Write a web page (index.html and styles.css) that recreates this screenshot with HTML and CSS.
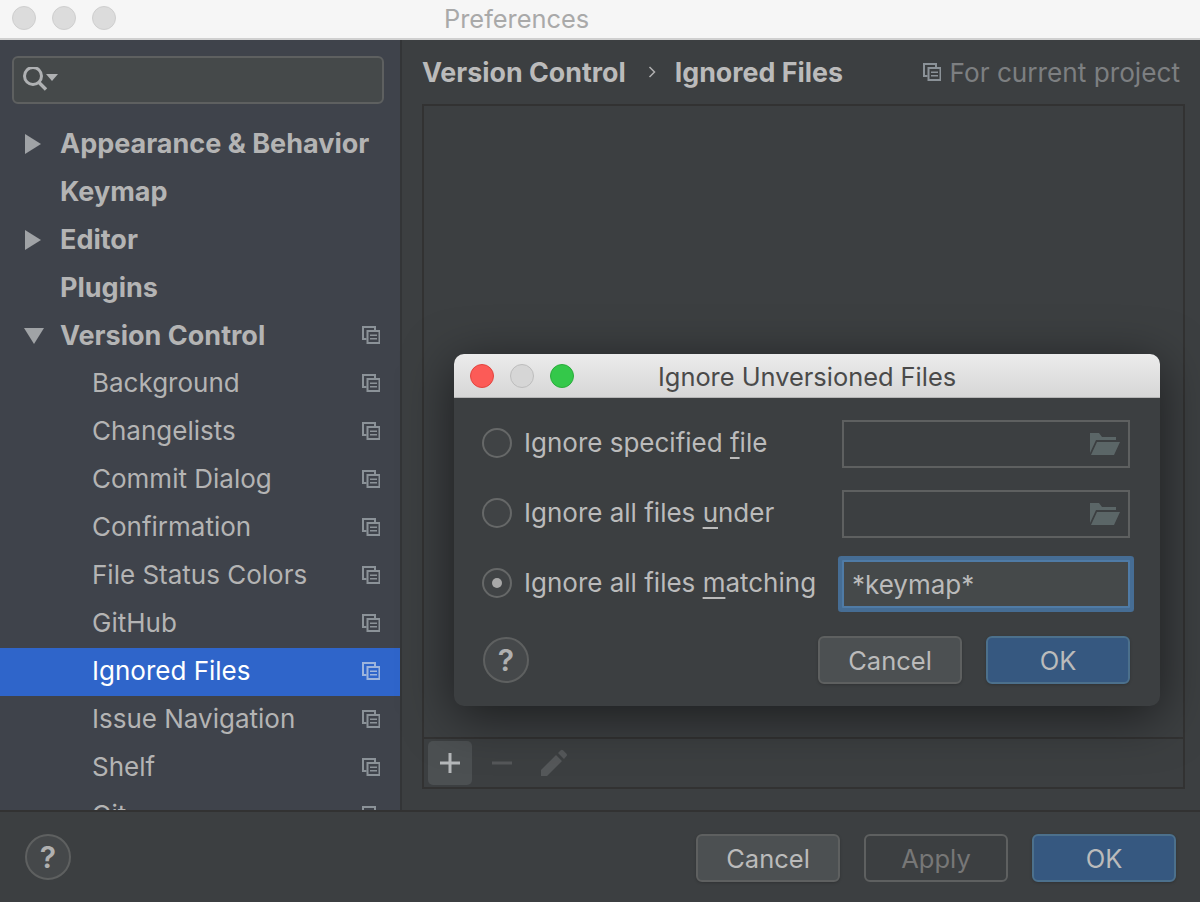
FILE: index.html
```html
<!DOCTYPE html>
<html lang="en">
<head>
    <meta charset="UTF-8">
    <meta name="viewport" content="width=device-width, initial-scale=1.0">
    <title>Preferences</title>
    <link rel="stylesheet" href="styles.css">
</head>
<body>
    <svg class="defs" width="0" height="0">
        <symbol id="project" viewBox="0 0 18 18">
            <path d="M4.500 13H1V1h12v3.500" fill="none" stroke="currentColor" stroke-width="2"/>
            <rect x="5.500" y="5" width="12" height="12" fill="none" stroke="currentColor" stroke-width="2"/>
            <path d="M8 8.500h7v1.600H8zM8 12h7v1.600H8z" fill="currentColor"/>
        </symbol>
        <symbol id="folder" viewBox="0 0 30 22">
            <path d="M0 22V0h9l3 4h14v3H6L0 20z M7 9h23l-6 13H1z" fill="currentColor"/>
        </symbol>
    </svg>

    <div class="window">
        <div class="title-bar">
            <span class="light"></span>
            <span class="light"></span>
            <span class="light"></span>
            <span class="window-title">Preferences</span>
        </div>

        <div class="main">
            <div class="sidebar">
                <div class="search">
                    <svg class="search-icon" width="36" height="26" viewBox="0 0 36 26">
                        <circle cx="11" cy="9" r="8.500" fill="none" stroke="currentColor" stroke-width="3"/>
                        <path d="M16.500 15l7.500 7.500" stroke="currentColor" stroke-width="3.400"/>
                        <path d="M24 7h12l-6 7z" fill="currentColor"/>
                    </svg>
                </div>
                <div class="tree">
                    <div class="row top"><span class="arrow right"></span>Appearance &amp; Behavior</div>
                    <div class="row top">Keymap</div>
                    <div class="row top"><span class="arrow right"></span>Editor</div>
                    <div class="row top">Plugins</div>
                    <div class="row top"><span class="arrow down"></span>Version Control<svg class="project"><use href="#project"/></svg></div>
                    <div class="row">Background<svg class="project"><use href="#project"/></svg></div>
                    <div class="row">Changelists<svg class="project"><use href="#project"/></svg></div>
                    <div class="row">Commit Dialog<svg class="project"><use href="#project"/></svg></div>
                    <div class="row">Confirmation<svg class="project"><use href="#project"/></svg></div>
                    <div class="row">File Status Colors<svg class="project"><use href="#project"/></svg></div>
                    <div class="row">GitHub<svg class="project"><use href="#project"/></svg></div>
                    <div class="row selected">Ignored Files<svg class="project"><use href="#project"/></svg></div>
                    <div class="row">Issue Navigation<svg class="project"><use href="#project"/></svg></div>
                    <div class="row">Shelf<svg class="project"><use href="#project"/></svg></div>
                    <div class="row">Git<svg class="project"><use href="#project"/></svg></div>
                </div>
            </div>

            <div class="content">
                <div class="crumbs">
                    <span class="crumb">Version Control</span>
                    <svg class="crumb-sep" width="8" height="14" viewBox="0 0 8 14">
                        <path d="M1.500 2l5 5-5 5" fill="none" stroke="currentColor" stroke-width="1.500"/>
                    </svg>
                    <span class="crumb">Ignored Files</span>
                    <span class="scope">
                        <svg class="project"><use href="#project"/></svg>
                        For current project
                    </span>
                </div>
                <div class="panel">
                    <div class="panel-list"></div>
                    <div class="toolbar">
                        <span class="tool active">
                            <svg width="22" height="22" viewBox="0 0 22 22"><path d="M9.500 1h3v8.500H21v3h-8.500V21h-3v-8.500H1v-3h8.500z" fill="currentColor"/></svg>
                        </span>
                        <span class="tool off">
                            <svg width="22" height="22" viewBox="0 0 22 22"><path d="M1 9.500h20v3H1z" fill="currentColor"/></svg>
                        </span>
                        <span class="tool off">
                            <svg width="28" height="28" viewBox="0 0 28 28"><path d="M1 27v-6L16 6l6 6L7 27zM18 4l2.500-2.500a2 2 0 0 1 2.800 0l3 3a2 2 0 0 1 0 2.800L24 10z" fill="currentColor"/></svg>
                        </span>
                    </div>
                </div>
            </div>
        </div>

        <div class="footer">
            <button class="help">?</button>
            <div class="buttons">
                <button class="btn">Cancel</button>
                <button class="btn disabled">Apply</button>
                <button class="btn primary">OK</button>
            </div>
        </div>
    </div>

    <div class="dialog">
        <div class="dialog-title">
            <span class="light red"></span>
            <span class="light grey"></span>
            <span class="light green"></span>
            <span class="dialog-name">Ignore Unversioned Files</span>
        </div>
        <div class="dialog-body">
            <div class="option">
                <span class="radio"></span>
                <span class="option-label">Ignore specified <u>f</u>ile</span>
                <div class="field"><svg class="folder"><use href="#folder"/></svg></div>
            </div>
            <div class="option">
                <span class="radio"></span>
                <span class="option-label">Ignore all files <u>u</u>nder</span>
                <div class="field"><svg class="folder"><use href="#folder"/></svg></div>
            </div>
            <div class="option">
                <span class="radio checked"></span>
                <span class="option-label">Ignore all files <u>m</u>atching</span>
                <div class="field focused">*keymap*</div>
            </div>
            <div class="dialog-actions">
                <button class="help">?</button>
                <div class="buttons">
                    <button class="btn">Cancel</button>
                    <button class="btn primary">OK</button>
                </div>
            </div>
        </div>
    </div>
</body>
</html>
```

FILE: styles.css
```css
* {
    box-sizing: border-box;
}
html, body {
    margin: 0;
    height: 902px;
    overflow: hidden;
}
body {
    font-family: Inter, "Noto Sans", sans-serif;
    font-size: 26px;
    color: #bbbbbb;
    background-color: #3c3f41;
    position: relative;
}
.defs {
    position: absolute;
}
.window {
    height: 902px;
    display: flex;
    flex-direction: column;
}
.title-bar {
    height: 40px;
    flex: none;
    display: flex;
    align-items: flex-start;
    gap: 16px;
    padding: 6px 0 0 12px;
    background-color: #f6f6f6;
    border-bottom: 2px solid #d0d0d0;
}
.light {
    width: 24px;
    height: 24px;
    border-radius: 50%;
    background-color: #dcdcdc;
    border: 1px solid #cfcfcf;
}
.window-title {
    margin-left: 312px;
    margin-top: -1px;
    font-size: 25.400px;
    line-height: 28px;
    color: #a9a9a9;
}
.main {
    height: 770px;
    flex: none;
    display: flex;
}
.sidebar {
    width: 402px;
    flex: none;
    overflow: hidden;
    padding-top: 16px;
    background-color: #3f434b;
    border-right: 2px solid #333537;
}
.search {
    height: 48px;
    margin: 0 16px 16px 12px;
    padding: 9px 0 0 8px;
    background-color: #45494a;
    border: 2px solid #5e6060;
    border-radius: 6px;
    color: #afb1b3;
}
.search-icon {
    display: block;
}
.row {
    position: relative;
    height: 48px;
    line-height: 46px;
    padding-left: 92px;
    color: #b4b4b4;
}
.row.top {
    padding-left: 60px;
    font-size: 27px;
    font-weight: 700;
    line-height: 48px;
}
.row.selected {
    background-color: #2f65ca;
    color: #ffffff;
}
.row .project {
    position: absolute;
    right: 20px;
    top: 14px;
}
.project {
    width: 18px;
    height: 18px;
    color: #8b9298;
}
.row.selected .project {
    color: #9db4dc;
}
.arrow {
    position: absolute;
    width: 0;
    height: 0;
    border-style: solid;
    border-color: transparent;
}
.arrow.right {
    left: 25px;
    top: 14px;
    border-width: 10px 0 10px 16px;
    border-left-color: #a0a3a6;
}
.arrow.down {
    left: 24px;
    top: 16px;
    border-width: 16px 10px 0 10px;
    border-top-color: #a0a3a6;
}
.content {
    flex: 1;
    min-width: 0;
    display: flex;
    flex-direction: column;
    padding: 0 15px 21px 20px;
}
.crumbs {
    height: 64px;
    flex: none;
    display: flex;
    align-items: center;
    white-space: nowrap;
}
.crumb {
    font-size: 26.800px;
    font-weight: 700;
    color: #bbbbbb;
}
.crumb-sep {
    margin: 0 19px 0 22px;
    color: #b0b0b0;
}
.scope {
    margin-left: auto;
    margin-right: 5px;
    display: flex;
    align-items: center;
    gap: 9px;
    font-size: 26.200px;
    color: #7d7f81;
}
.panel {
    flex: 1;
    display: flex;
    flex-direction: column;
    border: 2px solid #323232;
}
.panel-list {
    flex: 1;
}
.toolbar {
    height: 50px;
    flex: none;
    display: flex;
    align-items: center;
    gap: 8px;
    padding-left: 4px;
    border-top: 2px solid #323232;
}
.tool {
    width: 44px;
    height: 44px;
    display: flex;
    align-items: center;
    justify-content: center;
    border-radius: 5px;
}
.tool.active {
    background-color: #4c5052;
    color: #b5b8ba;
}
.tool.off {
    color: #55585a;
}
.footer {
    height: 92px;
    flex: none;
    display: flex;
    justify-content: space-between;
    align-items: flex-start;
    padding: 22px 24px 0 25px;
    border-top: 2px solid #323232;
}
.buttons {
    display: flex;
    gap: 24px;
}
.btn {
    width: 144px;
    height: 48px;
    padding: 0;
    font-family: inherit;
    font-size: 25.500px;
    color: #bbbbbb;
    background-color: #4c5052;
    border: 2px solid #5e6060;
    border-radius: 6px;
    box-shadow: 0 1px 3px rgba(0,0,0,0.2);
}
.btn.disabled {
    color: #777777;
    background-color: transparent;
    box-shadow: none;
}
.btn.primary {
    background-color: #365880;
    border-color: #4c708c;
}
.help {
    width: 46px;
    height: 46px;
    padding: 0;
    font-family: inherit;
    font-size: 30px;
    font-weight: 600;
    color: #b0b0b0;
    background-color: #45484a;
    border: 2px solid #5e6060;
    border-radius: 50%;
}
.dialog {
    position: absolute;
    left: 454px;
    top: 354px;
    width: 706px;
    height: 352px;
    background-color: #3c3f41;
    border-radius: 10px;
    box-shadow: 0 10px 50px rgba(0,0,0,0.55);
}
.dialog-title {
    height: 44px;
    display: flex;
    align-items: flex-start;
    gap: 16px;
    padding: 10px 0 0 16px;
    background: linear-gradient(#ececec, #d6d6d6);
    border-radius: 10px 10px 0 0;
    border-bottom: 1px solid #b5b5b5;
}
.light.red {
    background-color: #fc5b57;
    border-color: #e2453f;
}
.light.grey {
    background-color: #d6d6d6;
    border-color: #bdbdbd;
}
.light.green {
    background-color: #34c84a;
    border-color: #2aac3b;
}
.dialog-name {
    margin-left: 68px;
    margin-top: -1px;
    font-size: 25.400px;
    line-height: 28px;
    color: #4a4a4a;
}
.dialog-body {
    padding: 22px 30px 0 28px;
}
.option {
    height: 48px;
    margin-bottom: 22px;
    padding-bottom: 2px;
    display: flex;
    align-items: center;
    gap: 12px;
    white-space: nowrap;
}
.option-label {
    padding-bottom: 2px;
}
.option u {
    text-underline-offset: 5px;
    text-decoration-thickness: 2px;
}
.radio {
    width: 30px;
    height: 30px;
    flex: none;
    border: 2px solid #666868;
    border-radius: 50%;
    background-color: #404345;
    display: flex;
    align-items: center;
    justify-content: center;
}
.radio.checked::after {
    content: "";
    width: 10px;
    height: 10px;
    border-radius: 50%;
    background-color: #a8a8a8;
}
.field {
    width: 288px;
    height: 48px;
    margin-left: auto;
    align-self: flex-start;
    display: flex;
    align-items: center;
    justify-content: flex-end;
    padding-right: 8px;
    border: 2px solid #5e6060;
}
.field.focused {
    justify-content: flex-start;
    padding: 0 0 0 8px;
    background-color: #45494a;
    box-shadow: 0 0 0 4px #466d94;
    border-radius: 1px;
    border-color: #4f7ba6;
}
.folder {
    width: 30px;
    height: 22px;
    color: #5b6667;
}
.dialog-actions {
    display: flex;
    justify-content: space-between;
    align-items: center;
    margin-top: 28px;
    padding-left: 1px;
}
```
